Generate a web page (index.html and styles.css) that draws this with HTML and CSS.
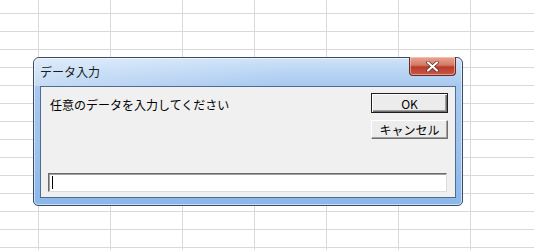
FILE: index.html
```html
<!DOCTYPE html>
<html>
<head>
    <title>データ入力</title>
    <link rel="stylesheet" href="styles.css">
</head>
<body>
    <div class="sheet"></div>

    <div class="dialog">
        <div class="titlebar">
            <span class="title">データ入力</span>
            <div class="close">
                <svg width="13" height="11" viewBox="0 0 13 11">
                    <path d="M2 1.5 L11 9.5 M11 1.5 L2 9.5" stroke="#5a2a24" stroke-width="3.6" stroke-linecap="round"/>
                    <path d="M2 1.5 L11 9.5 M11 1.5 L2 9.5" stroke="#ffffff" stroke-width="2.2" stroke-linecap="round"/>
                </svg>
            </div>
        </div>
        <div class="client">
            <div class="top-row">
                <div class="message">任意のデータを入力してください</div>
                <div class="buttons">
                    <button class="btn default">OK</button>
                    <button class="btn">キャンセル</button>
                </div>
            </div>
            <div class="input-box"><span class="caret"></span></div>
        </div>
    </div>
</body>
</html>
```

FILE: styles.css
```css
body {
    margin: 0;
    width: 534px;
    height: 250px;
    overflow: hidden;
    background: #ffffff;
    font-family: "Noto Sans CJK JP", "Liberation Sans", sans-serif;
    font-size: 12px;
    color: #000;
}
.sheet {
    width: 534px;
    height: 250px;
    background-image:
        linear-gradient(to right, #d9d9d9 1px, transparent 1px),
        linear-gradient(to bottom, #d9d9d9 1px, transparent 1px);
    background-size: 72px 18px;
    background-position: 38px 13px;
}
.dialog {
    position: absolute;
    left: 33px;
    top: 57px;
    width: 428px;
    height: 147px;
    border: 1px solid #3c4c62;
    border-radius: 6px 6px 5px 5px;
    background: linear-gradient(to bottom, #cfe2f8 0px, #b9d5f4 14px, #a7c8ef 28px, #9cc2ee 60%, #8ab7ec 100%);
    box-shadow: inset 0 0 0 1px rgba(255, 255, 255, 0.55);
    display: flex;
    flex-direction: column;
}
.titlebar {
    height: 28px;
    display: flex;
    align-items: flex-start;
    justify-content: space-between;
    padding: 0 6px 0 6px;
    background: linear-gradient(to right, rgba(255,255,255,0.35), rgba(255,255,255,0) 60%);
    border-radius: 5px 5px 0 0;
}
.title {
    margin-top: 6px;
    line-height: 16px;
    color: #1a1a1a;
}
.close {
    width: 45px;
    height: 18px;
    margin-top: -1px;
    border: 1px solid #6b2b23;
    border-top: none;
    border-radius: 0 0 4px 4px;
    background: linear-gradient(to bottom, #e8a593 0%, #d47a66 45%, #b83c28 55%, #c9574a 100%);
    box-shadow: inset 0 0 0 1px rgba(255, 220, 210, 0.5);
    display: flex;
    align-items: center;
    justify-content: center;
}
.client {
    flex: 1;
    margin: 0 6px 7px 6px;
    border: 1px solid #4f6c8e;
    background: #f0f0f0;
    display: flex;
    flex-direction: column;
    justify-content: space-between;
    padding: 6px 7px 5px 7px;
}
.top-row {
    display: flex;
    justify-content: space-between;
}
.message {
    margin-left: 2px;
    margin-top: 3px;
    line-height: 17px;
}
.buttons {
    display: flex;
    flex-direction: column;
    gap: 7px;
}
.btn {
    width: 77px;
    height: 19px;
    padding: 0;
    font-family: inherit;
    font-size: 12px;
    line-height: 15px;
    color: #000;
    background: #ececec;
    border: 1px solid;
    border-color: #ffffff #6f6f6f #6f6f6f #ffffff;
    box-shadow: inset -1px -1px 0 #a0a0a0;
}
.btn.default {
    height: 20px;
    border: 1px solid #1e1e1e;
    box-shadow: inset 1px 1px 0 #ffffff, inset -1px -1px 0 #6f6f6f, inset -2px -2px 0 #a0a0a0;
}
.input-box {
    height: 17px;
    margin-right: 1px;
    background: #ffffff;
    border: 1px solid;
    border-color: #6b6b6b #dcdcdc #dcdcdc #6b6b6b;
    box-shadow: inset 1px 1px 0 #a0a0a0;
    display: flex;
    align-items: center;
    padding-left: 3px;
}
.caret {
    width: 1px;
    height: 13px;
    background: #000;
}
```
